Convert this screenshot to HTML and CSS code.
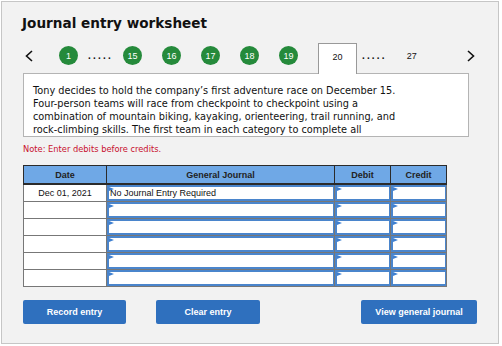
FILE: index.html
```html
<!DOCTYPE html>
<html>

<head>
    <meta charset="utf-8" />
    <title>Journal entry worksheet</title>
    <meta name="viewport" content="width=device-width, initial-scale=1">
    <link rel="stylesheet" href="styles.css">
</head>

<body>
    <div class="worksheet">
        <h2 class="title">Journal entry worksheet</h2>

        <div class="steps">
            <span class="arrow prev">
                <svg width="8" height="12" viewBox="0 0 8 12"><polyline points="7,1 1.5,6 7,11" fill="none" stroke="#111" stroke-width="1.6"/></svg>
            </span>
            <span class="step done first">1</span>
            <span class="dots">.....</span>
            <span class="step done">15</span>
            <span class="step done">16</span>
            <span class="step done">17</span>
            <span class="step done">18</span>
            <span class="step done">19</span>
            <span class="tab">20</span>
            <span class="dots after">.....</span>
            <span class="step plain">27</span>
            <span class="arrow next">
                <svg width="8" height="12" viewBox="0 0 8 12"><polyline points="1,1 6.5,6 1,11" fill="none" stroke="#111" stroke-width="1.6"/></svg>
            </span>
        </div>

        <div class="question">
            Tony decides to hold the company’s first adventure race on December 15.
            Four-person teams will race from checkpoint to checkpoint using a
            combination of mountain biking, kayaking, orienteering, trail running, and
            rock-climbing skills. The first team in each category to complete all
        </div>

        <p class="note">Note: Enter debits before credits.</p>

        <table class="journal">
            <thead>
                <tr>
                    <th class="col-date">Date</th>
                    <th class="col-gj">General Journal</th>
                    <th class="col-num">Debit</th>
                    <th class="col-num">Credit</th>
                </tr>
            </thead>
            <tbody>
                <tr>
                    <td class="date">Dec 01, 2021</td>
                    <td><div class="field">No Journal Entry Required</div></td>
                    <td><div class="field"></div></td>
                    <td><div class="field"></div></td>
                </tr>
                <tr>
                    <td class="date"></td>
                    <td><div class="field"></div></td>
                    <td><div class="field"></div></td>
                    <td><div class="field"></div></td>
                </tr>
                <tr>
                    <td class="date"></td>
                    <td><div class="field"></div></td>
                    <td><div class="field"></div></td>
                    <td><div class="field"></div></td>
                </tr>
                <tr>
                    <td class="date"></td>
                    <td><div class="field"></div></td>
                    <td><div class="field"></div></td>
                    <td><div class="field"></div></td>
                </tr>
                <tr>
                    <td class="date"></td>
                    <td><div class="field"></div></td>
                    <td><div class="field"></div></td>
                    <td><div class="field"></div></td>
                </tr>
                <tr>
                    <td class="date"></td>
                    <td><div class="field"></div></td>
                    <td><div class="field"></div></td>
                    <td><div class="field"></div></td>
                </tr>
            </tbody>
        </table>

        <div class="actions">
            <button class="btn record">Record entry</button>
            <button class="btn clear">Clear entry</button>
            <button class="btn view">View general journal</button>
        </div>
    </div>
</body>

</html>
```

FILE: styles.css
```css
body {
    margin: 0;
    font-family: "Liberation Sans", Arial, sans-serif;
}

.worksheet {
    box-sizing: border-box;
    margin: 1px;
    width: 498px;
    height: 343px;
    border: 1px solid #c6c6c6;
    background-color: #f2f2f2;
    padding-left: 21px;
}

.title {
    margin: 13px 0 0 -1px;
    font-family: "DejaVu Sans", Verdana, sans-serif;
    font-size: 13.6px;
    line-height: 17px;
    font-weight: bold;
    color: #111;
}

/* step navigation */
.steps {
    display: flex;
    align-items: center;
    height: 30px;
    box-sizing: border-box;
    padding-bottom: 5px;
    margin-top: 11px;
    font-size: 9px;
}

.arrow {
    display: flex;
    width: 8px;
}

.prev {
    margin-left: 2px;
}

.step {
    width: 19px;
    height: 19px;
    border-radius: 50%;
    display: flex;
    align-items: center;
    justify-content: center;
    margin-left: 20px;
}

.done {
    background-color: #258a3b;
    color: white;
}

.first {
    margin-left: 26px;
}

.dots {
    margin-left: 10px;
    font-size: 10px;
    font-weight: bold;
    letter-spacing: 2.2px;
    color: #111;
}

.dots + .step {
    margin-left: 10px;
}

.tab {
    align-self: stretch;
    margin: 0 0 -6px 20px;
    width: 39px;
    box-sizing: border-box;
    border: 1px solid #999;
    border-bottom: none;
    background-color: white;
    display: flex;
    align-items: center;
    justify-content: center;
    padding-bottom: 4px;
    position: relative;
    z-index: 1;
    color: #111;
}

.dots.after {
    margin-left: 5px;
}

.dots.after + .plain {
    width: auto;
    margin-left: 20px;
    background: none;
    color: #111;
}

.next {
    margin-left: 50px;
}

/* question text */
.question {
    box-sizing: border-box;
    width: 446px;
    height: 64px;
    overflow: hidden;
    border: 1px solid #b4b4b4;
    background-color: white;
    padding: 10px 63px 0 9px;
    font-family: "DejaVu Sans", Verdana, sans-serif;
    font-size: 9.75px;
    line-height: 13px;
    color: #111;
}

.note {
    margin: 7px 0 0 0;
    font-family: "DejaVu Sans", Verdana, sans-serif;
    font-size: 8.3px;
    line-height: 10px;
    color: #c8102e;
}

/* journal table */
.journal {
    margin-top: 11px;
    border-collapse: collapse;
    width: 423px;
    table-layout: fixed;
    font-size: 9px;
    color: #111;
}

.journal th {
    height: 17px;
    padding: 0;
    background-color: #6fa8e6;
    border: 1px solid #2b2b2b;
    border-bottom-width: 2px;
    font-weight: bold;
    color: #222;
}

.col-date {
    width: 82px;
}

.col-gj {
    width: 227px;
}

.col-num {
    width: 55px;
}

.journal td {
    height: 16px;
    padding: 0;
    border: 1px solid #777;
    background-color: white;
}

.journal td.date {
    text-align: center;
}

.field {
    position: relative;
    box-sizing: border-box;
    height: 16px;
    border: 2px solid #4a85cc;
    border-right-width: 1px;
    padding-left: 1px;
    line-height: 12px;
    background-color: white;
}

.field::before {
    content: "";
    position: absolute;
    left: 0;
    top: 0;
    border-left: 5px solid #3e7fd0;
    border-top: 2px solid transparent;
    border-bottom: 2px solid transparent;
}

/* buttons */
.actions {
    display: flex;
    margin-top: 13px;
}

.btn {
    height: 24px;
    border: none;
    border-radius: 2px;
    background-color: #2f70be;
    color: white;
    font-family: "Liberation Sans", Arial, sans-serif;
    font-size: 9px;
    font-weight: bold;
    padding: 0;
}

.record {
    width: 103px;
}

.clear {
    width: 104px;
    margin-left: 30px;
}

.view {
    width: 116px;
    margin-left: 101px;
}
```
